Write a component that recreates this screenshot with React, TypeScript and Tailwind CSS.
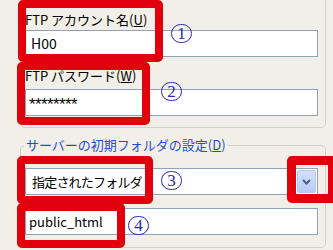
import React from "react";

const font = { fontFamily: '"Noto Sans CJK JP", "Noto Sans", sans-serif' };

function Circled({ n, className }: { n: string; className: string }) {
  return (
    <div
      className={`absolute flex h-[19px] w-[21px] items-center justify-center rounded-full border border-[#2a2ab8] text-[17px] leading-none text-[#2a2ab8] ${className}`}
      style={{ fontFamily: '"Liberation Serif", serif' }}
    >
      {n}
    </div>
  );
}

export default function App() {
  return (
    <div className="relative h-[250px] w-[333px] overflow-hidden bg-[#f1efe8] text-[13px] text-black" style={font}>
      {/* upper group */}
      <div className="mt-[-10px] ml-[20px] flex h-[138px] w-[306px] flex-col rounded-[5px] border border-[#d3d1c3] pt-[21px] pl-[4px] pr-[7px]">
        <div className="h-[16px] leading-[16px]">
          FTP アカウント名(<span className="underline">U</span>)
        </div>
        <div className="mt-[2px] flex h-[27px] items-center border border-[#8ea2b8] bg-white pl-[5px] text-[14px]">H00</div>
        <div className="mt-[11px] h-[16px] leading-[16px]">
          FTP パスワード(<span className="underline">W</span>)
        </div>
        <div
          className="mt-[5px] flex h-[27px] items-center border border-[#8ea2b8] bg-white pt-[5px] pl-[3px] text-[17px] tracking-[-0.6px]"
          style={{ fontFamily: '"Liberation Sans", sans-serif' }}
        >
          ********
        </div>
      </div>

      {/* lower group */}
      <div className="relative mt-[17px] ml-[20px] flex h-[103px] w-[306px] flex-col rounded-[5px] border border-[#d3d1c3] pt-[22px] pl-[4px] pr-[7px]">
        <div className="absolute top-[-9px] left-[3px] bg-[#f1efe8] px-[2px] leading-[16px] text-[#1e4fd2]">
          サーバーの初期フォルダの設定(<span className="underline">D</span>)
        </div>
        <div className="flex h-[27px] items-center justify-between border border-[#8ea2b8] bg-white pl-[6px] pr-[1px]">
          <span className="tracking-[-0.8px]">指定されたフォルダ</span>
          <div className="flex h-[23px] w-[19px] items-center justify-center rounded-[2px] border border-[#b7c9f0] bg-gradient-to-b from-[#d3e0fb] to-[#b6cbf6]">
            <svg width="9" height="6" viewBox="0 0 9 6">
              <path d="M1 1 L4.5 4.5 L8 1" fill="none" stroke="#4a5d86" strokeWidth="2" />
            </svg>
          </div>
        </div>
        <div className="mt-[13px] flex h-[27px] items-center border border-[#8ea2b8] bg-white pl-[3px] text-[13px]">public_html</div>
      </div>

      {/* red annotation boxes */}
      <div className="absolute top-[0px] left-[18px] h-[62px] w-[145px] rounded-[5px] border-[8px] border-[#e2000c]" />
      <div className="absolute top-[62px] left-[17px] h-[63px] w-[133px] rounded-[5px] border-[8px] border-[#e2000c]" />
      <div className="absolute top-[156px] left-[17px] h-[48px] w-[136px] rounded-[5px] border-[8px] border-[#e2000c]" />
      <div className="absolute top-[203px] left-[17px] h-[45px] w-[108px] rounded-[5px] border-[8px] border-[#e2000c]" />
      <div className="absolute top-[156px] left-[287px] h-[47px] w-[50px] rounded-[5px] border-[9px] border-[#e2000c]" />

      <Circled n="1" className="top-[24px] left-[171px]" />
      <Circled n="2" className="top-[82px] left-[161px]" />
      <Circled n="3" className="top-[171px] left-[161px]" />
      <Circled n="4" className="top-[216px] left-[128px]" />
    </div>
  );
}
